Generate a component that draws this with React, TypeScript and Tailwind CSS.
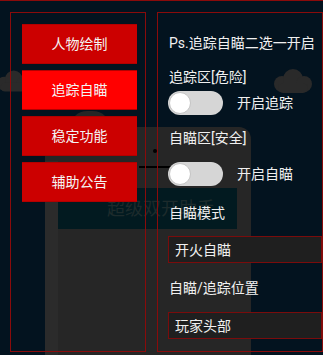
import * as React from 'react';

const FONT = { fontFamily: 'Roboto, "Noto Sans CJK SC", "Noto Sans", sans-serif' };

const MENU = ['人物绘制', '追踪自瞄', '稳定功能', '辅助公告'];

const Cloud: React.FC<{ className: string }> = ({ className }) => (
    <svg className={className} viewBox="0 0 46 24" fill="#2a2a2a">
        <circle cx="14" cy="15" r="8" />
        <circle cx="25" cy="10" r="10" />
        <circle cx="36" cy="15" r="8" />
        <rect x="10" y="14" width="30" height="10" rx="5" />
    </svg>
);

const Toggle: React.FC<{ label: string }> = ({ label }) => (
    <div className="flex items-center">
        <div className="w-[55px] h-6 rounded-full bg-[#d6d6d6] flex items-center pl-px">
            <div className="w-[22px] h-[22px] rounded-full bg-white border border-[#c4c4c4]" />
        </div>
        <span className="ml-[14px] text-[14px] leading-5 text-[#f0f0f0]">{label}</span>
    </div>
);

const Select: React.FC<{ value: string; className?: string }> = ({ value, className }) => (
    <div className={`h-[27px] border border-[#7a0c0c] bg-[#1f1f1f] flex items-center pl-[6px] text-[14px] text-[#f0f0f0] ${className ?? ''}`}>
        {value}
    </div>
);

export default function App() {
    const [active, setActive] = React.useState(1);

    return (
        <div className="relative w-[323px] h-[355px] overflow-hidden bg-[#03131f] border-t border-[#8a0b0b]" style={FONT}>
            {/* faded background scene */}
            <Cloud className="absolute left-[-8px] top-[68px] w-[40px] h-[24px]" />
            <Cloud className="absolute left-[268px] top-[68px] w-[46px] h-[24px]" />
            <div className="absolute left-[70px] top-[110px] w-[40px] h-[34px] rounded-full bg-[#262626]" />
            <div className="absolute left-[45px] top-[126px] w-[206px] h-[240px] rounded-t-[12px] bg-[#262626]" />
            <div className="absolute left-[45px] top-[160px] w-[13px] h-[200px] bg-[#2b2b2b]" />
            <div className="absolute left-[153px] top-[148px] w-[4px] h-[4px] rounded-full bg-black" />
            <div className="absolute left-[123px] top-[162px] w-[3px] h-[3px] rounded-full bg-black" />
            <div className="absolute left-[139px] top-[165px] w-[32px] h-[2px] bg-black" />
            <div className="absolute left-[58px] top-[187px] w-[179px] h-[41px] bg-[#021a20] flex items-center pl-[49px]">
                <span className="text-[18px] text-[#1d2b2c] whitespace-nowrap">超级双开助手</span>
            </div>

            <div className="relative flex gap-[11px] pl-[10px] pt-[11px]">
                {/* left menu */}
                <div className="w-[136px] h-[340px] border border-[#8a0b0b] px-[11px] pt-[11px] flex flex-col gap-[6px]">
                    {MENU.map((item, i) => (
                        <button
                            key={item}
                            onClick={() => setActive(i)}
                            className={`h-10 w-[115px] flex items-center justify-center text-[14px] text-[#f4f4f4] border-y border-[#b30000] ${
                                i === active ? 'bg-[#ff0000]' : 'bg-[#cc0000]'
                            }`}
                        >
                            {item}
                        </button>
                    ))}
                </div>

                {/* right settings */}
                <div className="w-[200px] h-[340px] border border-[#8a0b0b] pl-[11px] pt-[20px] flex flex-col text-[14px] leading-5 text-[#f0f0f0]">
                    <span className="whitespace-nowrap">Ps.追踪自瞄二选一开启</span>
                    <span className="mt-[14px]">追踪区[危险]</span>
                    <div className="mt-[4px] -ml-px">
                        <Toggle label="开启追踪" />
                    </div>
                    <span className="mt-[13px]">自瞄区[安全]</span>
                    <div className="mt-[14px] -ml-px">
                        <Toggle label="开启自瞄" />
                    </div>
                    <span className="mt-[17px]">自瞄模式</span>
                    <Select value="开火自瞄" className="mt-[13px] -ml-px" />
                    <span className="mt-[15px]">自瞄/追踪位置</span>
                    <Select value="玩家头部" className="mt-[14px] -ml-px h-[26px]" />
                </div>
            </div>
        </div>
    );
}
